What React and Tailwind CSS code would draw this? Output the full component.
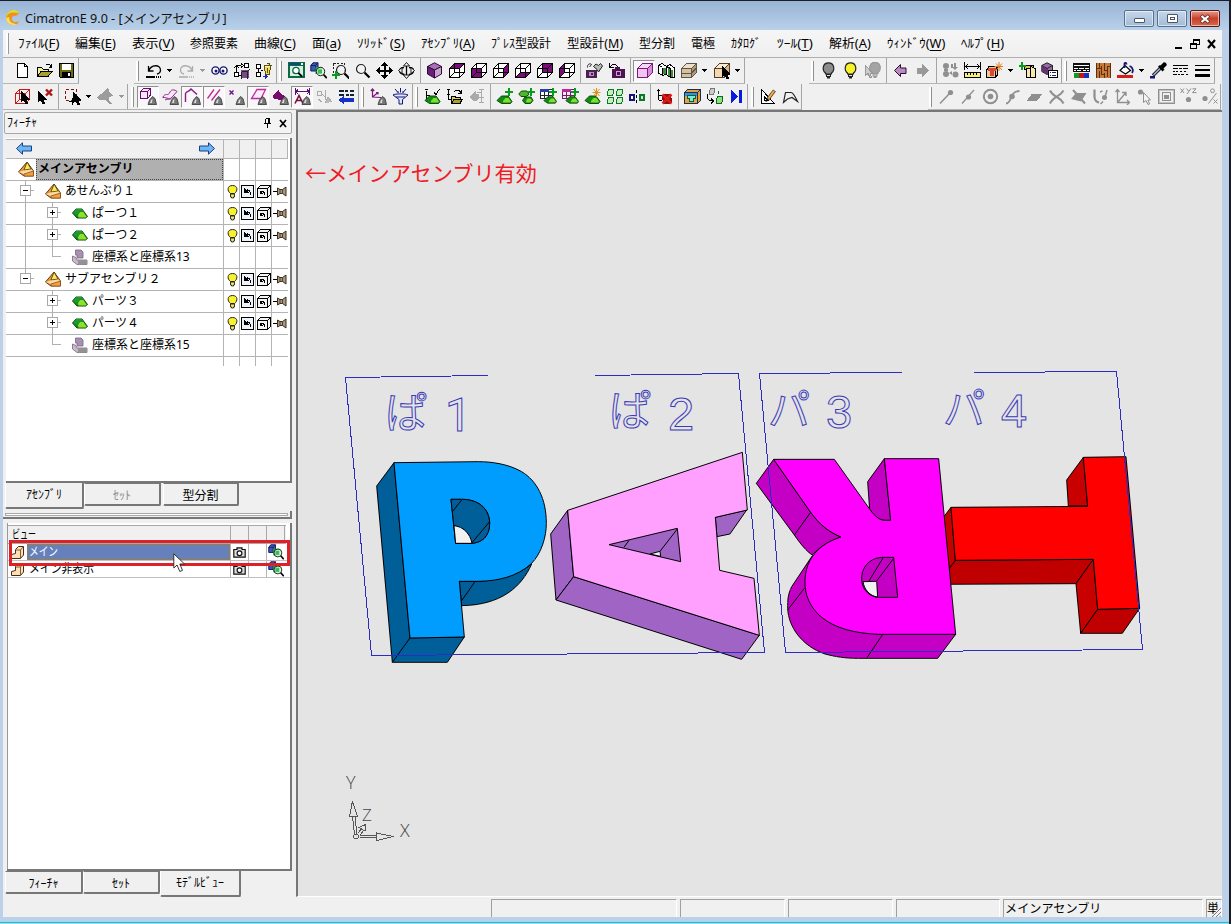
import React, { useLayoutEffect, useRef, useState } from "react";

const JP = "font-['Noto_Sans','Noto_Sans_CJK_JP',sans-serif]";

/* Text condensed or expanded to a fixed width. */
function Fit({ w, className = "", children }) {
  const ref = useRef(null);
  const [scale, setScale] = useState(1);
  useLayoutEffect(() => {
    setScale(w / ref.current.offsetWidth);
  }, [w]);
  return (
    <span className={"inline-block shrink-0 whitespace-nowrap " + className} style={{ width: w }}>
      <span ref={ref} className="inline-block origin-left" style={{ transform: `scaleX(${scale})` }}>
        {children}
      </span>
    </span>
  );
}

const L = ({ d, c = "#000", f = "none", w = 1 }) => <path d={d} stroke={c} fill={f} strokeWidth={w} />;
const F = ({ d, f = "#000" }) => <path d={d} fill={f} />;

const FACES = {
  top: "M1.5 6.500L6.500 1.500H16.500L11.500 6.500Z",
  front: "M1.500 6.500H11.500V15.500H1.500Z",
  right: "M11.500 6.500L16.500 1.500V10.500L11.500 15.500Z",
  bottom: "M1.500 15.500L6.500 10.500H16.500L11.500 15.500Z",
  back: "M6.500 1.500H16.500V10.500H6.500Z",
  left: "M1.500 6.500L6.500 1.500V10.500L1.500 15.500Z",
};
const WIRE = "M1.5 6.5H11.5V15.5H1.5ZM6.5 1.5H16.5V10.5H6.5ZM1.5 6.5L6.5 1.5M11.5 6.5L16.5 1.5M11.5 15.5L16.5 10.5M1.5 15.5L6.5 10.5";
const Cube = ({ face }) => (
  <>
    <F d="M1.500 6.500L6.500 1.500H16.500V10.500L11.500 15.500H1.500Z" f="#fff" />
    <F d={FACES[face]} f="#7b0a7b" />
    <L d={WIRE} />
  </>
);
const Solid = ({ a, b, c, s = "#000" }) => (
  <>
    <L d="M1.5 6.5L6.5 1.5H16.5L11.5 6.5Z" f={a} c={s} />
    <L d="M1.5 6.5H11.5V15.5H1.5Z" f={b} c={s} />
    <L d="M11.5 6.5L16.5 1.5V10.5L11.5 15.5Z" f={c} c={s} />
  </>
);
const Blob = () => (
  <g shapeRendering="auto">
    <path d="M8 16.500L9.500 12L12.500 8.500L15 10.500L16.500 16.500Z" fill="#777" stroke="#333" strokeWidth=".8" />
    <path d="M10 15L11 12L12.500 11L12 15Z" fill="#ddd" />
  </g>
);
const Green = () => (
  <g shapeRendering="auto">
    <L d="M1 12.500L5.500 8H12L16 13.500L14.500 15.500H5.500Z" f="#138a13" c="#0a4d0a" />
    <F d="M7 13L9.500 10H12.500L15 13.500L14 14.500H7Z" f="#7be02f" />
  </g>
);
const Plus = () => <F d="M12 0H14V3H17V5H14V8H12V5H9V3H12Z" f="#0a9a1e" />;
const Bulb = ({ f, c = "#222" }) => (
  <g shapeRendering="auto">
    <path d="M5.500 11C1.800 8 2.500 .8 8.500 .8S15.200 8 11.500 11V12H5.500Z" fill={f} stroke={c} strokeWidth="1.200" />
    <F d="M6 12H11V15H10V16.500H7V15H6Z" f={c} />
    <F d="M7 13H10V14H7Z" f="#ddd" />
  </g>
);
const Lens = ({ x = 0, y = 0 }) => (
  <g transform={`translate(${x} ${y})`} shapeRendering="auto">
    <circle cx="6" cy="6" r="4.500" fill="#f4f4f4" fillOpacity=".7" stroke="#222" strokeWidth="1.200" />
    <path d="M9.500 9.500L14.500 14.500" stroke="#000" strokeWidth="2.200" />
  </g>
);
const Zoomer = () => (
  <g shapeRendering="auto">
    <path d="M.8 3.500L3 .8H8V7L6 9H.8Z" fill="#3c56b8" stroke="#101860" />
    <path d="M.8 3.500H5.500V9M5.500 3.500L8 .8" fill="none" stroke="#101860" strokeWidth=".8" />
    <F d="M5.500 5H12V12H5.500Z" f="#1fa838" />
    <circle cx="10.500" cy="9.500" r="4.200" fill="#d8f4dc" fillOpacity=".75" stroke="#222" />
    <F d="M8 7.500H12V11.500H8Z" f="#2fc050" />
    <path d="M13.500 12.500L16.800 16.200" stroke="#000" strokeWidth="1.800" />
  </g>
);
const Cursor = ({ x = 0, y = 0, f = "#000", c = "#000" }) => (
  <g transform={`translate(${x} ${y})`}>
    <L d="M6.500 3.500V13.500L9 11.500L11 15.500L12.500 15L11 11H13.500Z" f={f} c={c} />
  </g>
);
const GT = "#8f8f8f";

const ICONS = {
  new: <L d="M3.500 1.500H10.500L13.500 4.500V15.500H3.500ZM10.500 1.500V4.500H13.500" f="#fff" />,
  open: (
    <>
      <L d="M1.500 14.500V5.500H5.500L7 7H12.500V9" f="#f4ef9a" />
      <L d="M1.500 14.500L5 9.500H16L12 14.500Z" f="#a8a030" />
      <L d="M9.500 3.500C11 1.500 13.500 1.500 15 4.500M15.500 2V5H12.500" />
    </>
  ),
  save: (
    <>
      <L d="M1.500 1.500H15.500V15.500H2.500L1.500 14.500Z" f="#6b6b16" />
      <F d="M4 2H13V8H4Z" f="#fff" />
      <F d="M4 10H13V15H4Z" />
      <F d="M10 11H12V14H10Z" f="#fff" />
    </>
  ),
  undo: (
    <>
      <g shapeRendering="auto">
        <path d="M3.500 4V9H8.500M4 8.500C6 2.500 15.500 2 15.500 8C15.500 10.500 14 11.500 12 12" fill="none" stroke="#000" strokeWidth="1.300" />
      </g>
      <L d="M1 14.500H10M11 14.500H12M13 14.500H14M15 14.500H16" w={2} />
    </>
  ),
  redo: (
    <>
      <g shapeRendering="auto">
        <path d="M14.500 4V9H9.500M14 8.500C12 2.500 2.500 2 2.500 8C2.500 10.500 4 11.500 6 12" fill="none" stroke="#aaa" strokeWidth="1.300" />
      </g>
      <L d="M1 14.500H10M11 14.500H12M13 14.500H14M15 14.500H16" c="#bbb" w={2} />
    </>
  ),
  eyes: (
    <g shapeRendering="auto">
      <circle cx="4.500" cy="8.500" r="3.600" fill="#fff" stroke="#14146e" strokeWidth="1.400" />
      <circle cx="12.500" cy="8.500" r="3.600" fill="#fff" stroke="#14146e" strokeWidth="1.400" />
      <circle cx="5" cy="9" r="1.500" fill="#14146e" />
      <circle cx="12" cy="9" r="1.500" fill="#14146e" />
    </g>
  ),
  swap: (
    <>
      <L d="M3.500 14V3.500H8M1 6L3.500 3.500L6 6M8 1.500L10.500 3.500L8 5.500M3 13.500H8" />
      <L d="M11.500 1.500H15.500V5.500H11.500ZM1.500 10.500H5.500V14.500H1.500Z" f="#fff" />
      <F d="M8 8H16V16H8Z" f="#7a4a88" />
      <L d="M8.500 9.500H14.500V16.500M14.500 9.500L16.500 7.500M8.500 9.500V16.500" c="#222" />
    </>
  ),
  purge: (
    <>
      <L d="M1.500 2.500H5.500V6.500H1.500ZM1.500 10.500H5.500V14.500H1.500ZM3.500 6.500V10.500M5.500 8.500H8" f="#fff" />
      <L d="M8.500 3.500H16.500M9.500 4.500L10.500 12.500H14.500L15.500 4.500M11.500 1.500H14V3" f="#f5dc4a" c="#5a5010" />
      <L d="M12.500 6V11" c="#5a5010" />
      <L d="M7.500 14.500H12M10 12.500L12.500 14.500L10 16.500" c="#1a30b0" />
    </>
  ),
  fitwin: (
    <>
      <F d="M0 0H17V16H0Z" f="#0a6a48" />
      <F d="M1 1H12V3H1Z" f="#1d3f8a" />
      <F d="M13 1H15V3H13Z" f="#fff" />
      <F d="M2 4H15V14H2Z" f="#d8f0dc" />
      <g shapeRendering="auto">
        <circle cx="8" cy="8.500" r="3.200" fill="#fff" stroke="#0a6a48" strokeWidth="1.300" />
        <path d="M10.300 10.800L14 14.500" stroke="#000" strokeWidth="1.800" />
      </g>
    </>
  ),
  zoomcol: <Zoomer />,
  zoomwin: (
    <>
      <path d="M1.500 1.500H12.500V12.500H1.500Z" fill="none" stroke="#222" strokeDasharray="2 1.500" />
      <Lens x={3} y={2} />
      <F d="M3 9H5V12H8V14H5V17H3V14H0V12H3Z" f="#0a9a1e" />
    </>
  ),
  lens: <Lens x={1} y={1} />,
  pan: (
    <>
      <L d="M8.500 2V15M2 8.500H15" w={2} />
      <F d="M8.500 0L12 4H5ZM8.500 17L12 13H5ZM0 8.500L4 5V12ZM17 8.500L13 5V12Z" />
    </>
  ),
  orbit: (
    <g shapeRendering="auto">
      <path d="M8.500 3V14M6.500 12.500C0 11.500 0 5.500 6 5.500M11 5.500C17 5.500 17 11.500 11 12.500" fill="none" stroke="#000" strokeWidth="1.300" />
      <path d="M8.500 .5L11.500 4H5.500ZM8.500 16.500L11.500 13H5.500ZM.5 8.500L4 5.500V11.500ZM16.500 8.500L13 5.500V11.500Z" fill="#fff" stroke="#000" strokeWidth=".9" />
    </g>
  ),
  iso: (
    <g shapeRendering="auto">
      <L d="M1.500 4.500L8.500 .8L15.500 4.500L8.500 8Z" f="#a96fb5" c="#2d0b35" />
      <L d="M1.500 4.500L8.500 8V16L1.500 12Z" f="#6a1f7a" c="#2d0b35" />
      <L d="M15.500 4.500L8.500 8V16L15.500 12Z" f="#c9a3d0" c="#2d0b35" />
    </g>
  ),
  cTop: <Cube face="top" />,
  cFront: <Cube face="front" />,
  cRight: <Cube face="right" />,
  cBottom: <Cube face="bottom" />,
  cBack: <Cube face="back" />,
  cLeft: <Cube face="left" />,
  heartbox: (
    <>
      <g shapeRendering="auto">
        <path d="M7.500 4.500L10 2L12.500 3.500L14.500 1.500L16.500 4L12.500 10L11 7.500Z" fill="#b8b8b8" stroke="#222" />
        <path d="M1.500 5.500C1 2.500 4 .8 5.500 2.500L3.500 5" fill="none" stroke="#222" />
      </g>
      <F d="M0 8H11V16H0Z" f="#4b2350" />
      <F d="M3 10H8V14H3Z" f="#b98cc0" />
      <F d="M5 11H7V13H5Z" f="#4b2350" />
    </>
  ),
  camundo: (
    <>
      <L d="M1.500 1V5.500H5.500M2 5C5 1 9 2 9.500 5.500" />
      <F d="M4 7H17V16H4ZM7 5H12V7H7Z" f="#4b1450" />
      <F d="M8 9H13V14H8Z" f="#cda0d4" />
      <F d="M9 10H12V13H9Z" f="#4b1450" />
    </>
  ),
  shade: <Solid a="#f6d8f6" b="#f1c4f1" c="#d58ed5" s="#7a1a7a" />,
  section: (
    <>
      <L d="M.5 3.500L4 1.500L8.500 4.500L12 2.500L16.500 6V15.500H12.500L8 12.500L4.500 13.500L.5 11Z" f="#fff" />
      <F d="M5 6H8V12H5ZM10 6H12V14H10ZM13 8H15V15H13Z" f="#3f8a3f" />
      <L d="M4.500 5.500V13M8.500 5V12M12.500 6V15M4.500 5.500L1 3.500M12.500 6.500L8.500 4.500" />
    </>
  ),
  tanbox: (
    <>
      <Solid a="#efdfc6" b="#d9c09a" c="#b8986e" s="#555" />
      <L d="M1.500 11H11.500L16.500 6" c="#555" />
    </>
  ),
  pickbox: (
    <>
      <Solid a="#f9ead2" b="#f1d8b2" c="#d8b48a" s="#5a3a1a" />
      <Cursor x={3} y={1} />
    </>
  ),
  bulbGray: <Bulb f="#8c8c8c" />,
  bulbOn: <Bulb f="#f8f22a" />,
  bulbPick: (
    <>
      <g transform="translate(2.500 -.5)">
        <Bulb f="#a4a4a4" c="#999" />
      </g>
      <Cursor x={-5} f="#ccc" c="#999" />
    </>
  ),
  prev: (
    <g shapeRendering="auto">
      <L d="M2.500 8.500L8.500 2.500V6H14V11.500H8.500V14.500Z" f="#b98cc0" c="#2d0b35" />
    </g>
  ),
  next: <L d="M14.500 8.500L8.500 3V6H3.500V11.500H8.500V14.500Z" f="#999" c="#999" />,
  graydots: (
    <g shapeRendering="auto">
      <circle cx="4" cy="4" r="3" fill={GT} />
      <circle cx="4" cy="12" r="3" fill={GT} />
      <circle cx="13.500" cy="12.500" r="3" fill={GT} />
      <F d="M9 2H11V6H9ZM12 1H14V5H16L13 8L10 5H12ZM7 11L10 9V13ZM2 7H6V9H2Z" f={GT} />
    </g>
  ),
  measure: (
    <>
      <L d="M.5 0V8M16.500 0V8M1 4.500H16M4 2L1.500 4.500L4 7M13 2L15.500 4.500L13 7" />
      <L d="M.5 10.500H16.500V15.500H.5Z" f="#f6ef7a" />
      <L d="M3.500 11V13M6.500 11V13M9.500 11V13M12.500 11V13" />
    </>
  ),
  boxspark: (
    <>
      <L d="M.5 7.500L3 4.500H11.500V13L9.500 15.500H.5ZM.5 7.500H9.500V15M9.500 7.500L11.500 4.500" f="#eec9a0" />
      <F d="M2 6H10V9H8V14H4V9H2Z" f="#d84a30" />
      <g shapeRendering="auto">
        <L d="M13 0V9M8.500 4.500H17M10 1.500L16 8M16 1.500L10 8" c="#e07b1a" />
      </g>
    </>
  ),
  pastepl: (
    <>
      <L d="M5.500 3.500H14.500V7.500H5.500Z" f="#e6c35a" />
      <L d="M7.500 6.500H11.500V15.500H7.500ZM11.500 4.500L16.500 6.500V15.500H11.500Z" f="#f6e9b0" />
      <F d="M2 0H4V3H7V5H4V8H2V5H0V3H2Z" f="#0a9a1e" />
    </>
  ),
  cubeprops: (
    <>
      <g shapeRendering="auto">
        <L d="M.8 3.500L6 .8L11.500 3.500V9.500L6 12.500L.8 9.500Z" f="#9a6aa8" c="#222" />
        <L d="M.8 3.500L6 6.500L11.500 3.500M6 6.500V12" c="#222" />
        <F d="M1 4L6 7V12L1 9.500Z" f="#6a2f7a" />
      </g>
      <L d="M7.500 8.500H16.500V15.500H7.500Z" f="#fff" />
      <L d="M9 10.500H10M11 10.500H15M9 13.500H10M11 13.500H15" c="#226" />
    </>
  ),
  palette: (
    <>
      <F d="M0 1H17V10H0Z" f="#111" />
      <L d="M1 3.500H16M1 6.500H5M6 6.500H11M12 6.500H16M1 8.500H3M4 8.500H8M10 8.500H13M14 8.500H16" c="#fff" />
      <F d="M1 11H6V16H1Z" f="#109a28" />
      <F d="M6 11H11V16H6Z" f="#c01818" />
      <F d="M11 11H16V16H11Z" f="#1830c0" />
    </>
  ),
  bricks: (
    <>
      <F d="M1 1H16V16H1Z" f="#c87a3a" />
      <L d="M1.500 1V16M4.500 1V7M6.500 4V12M9.500 1V8M12.500 5V15M4.500 9V16M9.500 11V16M15.500 1V16M1 6.500H6M6 12.500H10M9 8.500H13M12 4.500H16" c="#5f2f0c" />
    </>
  ),
  paint: (
    <>
      <g shapeRendering="auto">
        <path d="M3 8.500L8 3.500L13.500 8.500L8.500 12Z" fill="#fff" stroke="#000" strokeWidth="1.200" />
        <path d="M7.500 6V1.500C8 .5 9.500 .5 9.500 2.500M12.500 4C16 5 16.500 9 15 11" fill="none" stroke="#14147a" strokeWidth="1.800" />
      </g>
      <F d="M0 13H16V16H0Z" f="#d81c1c" />
    </>
  ),
  dropper: (
    <g shapeRendering="auto">
      <path d="M3 13.500L10.500 6" stroke="#222" strokeWidth="3.400" />
      <path d="M3.500 13L10 6.500" stroke="#9fb8d8" strokeWidth="1.400" />
      <F d="M8 4.500L10 3L14.500 7.500L12.500 9.500ZM10.500 3.500L13.500 .5C15 -.5 17.500 2 16.500 3.500L13.500 6.500Z" />
      <F d="M0 14H5V16.500H0Z" f="#14147a" />
    </g>
  ),
  linetypes: (
    <L d="M1 3.500H16M1 6.500H6M7 6.500H10M11 6.500H16M1 9.500H3M4 9.500H6M8 9.500H10M12 9.500H14M1 12.500H5M6 12.500H8M9 12.500H12M14 12.500H16" />
  ),
  lineweights: (
    <>
      <F d="M1 3H16V4H1ZM1 7H16V9H1ZM1 12H16V15H1Z" />
    </>
  ),
  selbox: (
    <>
      <L d="M1.500 5.500H11.500V15.500H1.500ZM5.500 1.500H15.500V11.500H5.500ZM1.500 5.500L5.500 1.500M11.500 5.500L15.500 1.500M11.500 15.500L15.500 11.500M1.500 15.500L5.500 11.500" c="#c81818" />
      <Cursor x={1} />
    </>
  ),
  curx: (
    <>
      <Cursor x={-4} y={0} />
      <g shapeRendering="auto">
        <L d="M10 1.500L16 7.500M16 1.500L10 7.500" c="#b01414" w={2.4} />
      </g>
    </>
  ),
  marquee: (
    <>
      <path d="M1.500 1.500H12.500V12.500H1.500Z" fill="none" stroke="#8a1010" strokeWidth="1.500" strokeDasharray="3 2" />
      <Cursor x={3} y={1} />
      <L d="M5 13.500H11M8.500 10V16.500" />
    </>
  ),
  graytool: <F d="M0 9L7 4L10 0L12 1V4L16 8L12 9V12L15 16H12L8 11L7 12H2Z" f="#9c9c9c" />,
  h1: (
    <>
      <L d="M.5 3.500L3.500 .5H10.500V7L7.500 10.500H.5ZM.5 3.500H7.500V10M7.500 3.500L10.500 .5" c="#6a0a6a" f="#f7e6f7" />
      <Blob />
    </>
  ),
  h2: (
    <g shapeRendering="auto">
      <L d="M.8 9.500C3 4 6 9 8 4C9.500 1 12.500 1.500 15 3.500L11 8C8 13 5 9 .8 9.500Z" c="#8a2a8a" f="#f7e6f7" />
      <L d="M3 12C6 10 8 13 10 9" c="#8a2a8a" />
      <Blob />
    </g>
  ),
  h3: (
    <g shapeRendering="auto">
      <L d="M1.500 14V5.500C3 3 5 4 7 1L13 6.500" c="#8a1a8a" w={1.4} />
      <Blob />
    </g>
  ),
  h4: (
    <g shapeRendering="auto">
      <L d="M1.500 10.500L8 1.500M5.500 12.500L14 1.500" c="#c02a90" w={1.3} />
      <Blob />
    </g>
  ),
  h5: (
    <>
      <g shapeRendering="auto">
        <L d="M1.500 2.500L5.500 6.500M5.500 2.500L1.500 6.500" c="#6a0a8a" w={1.3} />
      </g>
      <Blob />
    </>
  ),
  h6: (
    <>
      <g shapeRendering="auto">
        <L d="M1.500 10.500L7 1.500H15.500L11 10.500Z" c="#c02aa0" w={1.3} f="#f9eef9" />
      </g>
      <Blob />
    </>
  ),
  h7: (
    <>
      <F d="M1 8L7 1V4L14 9L9 12L2 11Z" f="#7a0a6a" />
      <Blob />
    </>
  ),
  h8: (
    <>
      <L d="M1.500 0V7M15.500 0V7M2 3.500H15M4 1.500L2 3.500L4 6M13 1.500L15 3.500L13 6" c="#5a0a7a" />
      <g shapeRendering="auto">
        <L d="M1 15.500L5 7.500L9 15.500M2.500 12.500H7.500" c="#7a0a3a" w={1.6} />
      </g>
      <Blob />
    </>
  ),
  h9: (
    <>
      <L d="M1.500 3.500H5.500V7.500H1.500ZM5.500 5.500L9 9M9 2V12M2 11L6 14" c="#aaa" />
      <L d="M9 15L12 9L16 14" f="#bbb" c="#aaa" />
    </>
  ),
  h10: (
    <>
      <L d="M1 2.500H6M7 2.500H10M12 2.500H16M1 6.500H6M8 6.500H11M12 6.500H16" w={2} c="#123" />
      <F d="M0 12L6 8V10H16V14H6V16Z" f="#1430c8" />
    </>
  ),
  axhide: (
    <>
      <g shapeRendering="auto">
        <L d="M2.500 1V9L11 9.500M2.500 9L8 4.500M.8 3L2.500 1L4.200 3M8 6.500V4.500H6" c="#7a1a7a" w={1.2} />
      </g>
      <Blob />
    </>
  ),
  funnel: (
    <g shapeRendering="auto">
      <path d="M1 7C3 5.500 14 5.500 16 7L10.500 11.500V16H7V11.500Z" fill="#dde6ff" stroke="#14147a" />
      <L d="M3 1L6 4.500M8.500 0V4.500M14 1L11 4.500M4 9H13M6 3V5M11 3V5" c="#14147a" />
    </g>
  ),
  asmadd: (
    <>
      <L d="M2.500 2.500V12.500H7M2.500 7.500H6M1 1.500H4M10 4.500L12 6.500L15.500 1" />
      <Green />
    </>
  ),
  asmopen: (
    <>
      <L d="M2.500 1.500V11.500H6M1 1.500H4M1 6.500H4M8 4C10 1 14 2 15 5M15.500 2V5H12" />
      <L d="M5.500 8.500H9L10 9.500H14.500V14.500H5.500Z" f="#d8cf50" />
      <L d="M5.500 15.500L8 11.500H16L14 15.500Z" f="#a8a030" />
    </>
  ),
  asmgray: (
    <>
      <F d="M1 9L8 3V6H11V10L8 13H5Z" f="#aaa" />
      <L d="M9 4.500H14M13.500 1V15M11 9.500H16M11 14.500H16M11 1.500H16" c="#aaa" />
    </>
  ),
  gplus: (
    <>
      <Green />
      <Plus />
    </>
  ),
  g2plus: (
    <>
      <g shapeRendering="auto">
        <L d="M.8 6L3.500 3H9L11 6.500L8 8.500H3Z" f="#4fb82a" c="#0a4d0a" />
        <L d="M4.500 12.500L7 9H13L15 12.500L12.500 15.500H7Z" f="#138a13" c="#0a4d0a" />
        <F d="M8 13L9.500 10.500H12.500L14 12.500L12 14.500H8.500Z" f="#7be02f" />
      </g>
      <Plus />
    </>
  ),
  tplus: (
    <>
      <L d="M.5 1.500H12.500V10.500H.5Z" f="#fff" c="#223" />
      <F d="M0 1H9V4H0Z" f="#2440a8" />
      <L d="M4.500 4V10M8.500 4V10M1 7.500H12" c="#223" />
      <g transform="translate(3 2) scale(.85)">
        <Green />
      </g>
      <Plus />
    </>
  ),
  pplus: (
    <>
      <L d="M.5 1.500H12.500V10.500H.5Z" f="#fbe6f6" c="#7a1a6a" />
      <F d="M0 1H9V4H0Z" f="#b82a98" />
      <L d="M4.500 4V10M8.500 4V10M1 7.500H12" c="#7a1a6a" />
      <g transform="translate(3 2) scale(.85)">
        <Green />
      </g>
      <Plus />
    </>
  ),
  gspark: (
    <>
      <Green />
      <g shapeRendering="auto">
        <L d="M12.500 0V9M8.500 4.500H16.500M9.500 1L15.500 8M15.500 1L9.500 8" c="#e0901a" />
      </g>
    </>
  ),
  gfour: (
    <L
      d="M1.500 3.500L3 1.500H7.500V5.500L6 7.500H1.500ZM10.500 3.500L12 1.500H16.500V5.500L15 7.500H10.500ZM1.500 11.500L3 9.500H7.500V13.500L6 15.500H1.500ZM10.500 11.500L12 9.500H16.500V13.500L15 15.500H10.500Z"
      f="#c8f0b8"
      c="#0a7a2a"
    />
  ),
  mirror: (
    <>
      <L d="M1.500 6.500H5.500V11.500H1.500Z" f="#fff" c="#14147a" w={2} />
      <L d="M11.500 6.500H15.500V11.500H11.500Z" f="#bff0b0" c="#0a7a2a" w={2} />
      <L d="M8.500 2V5M8.500 7V10M8.500 12V15" />
    </>
  ),
  gdel: (
    <>
      <L d="M2.500 1V12M1 2.500H4M2.500 7.500H6M2.500 12H6" />
      <F d="M6 8L9 6H15L16 14L13 16H7Z" f="#8a1010" />
      <g shapeRendering="auto">
        <L d="M6.500 6.500L15.500 15.500M15.500 6.500L6.500 15.500" c="#e01818" w={2.5} />
      </g>
    </>
  ),
  mold: (
    <>
      <L d="M.5 4.500L3.500 1.500H16.500V12.500L13.500 15.500H.5Z" f="#e8a03a" c="#16305a" />
      <F d="M1 5H13V8H1Z" f="#3a90d8" />
      <L d="M3.500 7.500H11.500V10.500H9.500V13.500H5.500V10.500H3.500Z" f="#7fe8d4" c="#063" />
      <L d="M.5 4.500H13.500V15.500M13.500 4.500L16.500 1.500" c="#16305a" />
    </>
  ),
  link: (
    <>
      <L d="M3.500 2.500L5 .5H8.500V4.500L7 6.500H3.500Z" f="#ccc" c="#777" />
      <L d="M1.500 6C0 11 3 13 7 13M5 10.500L7.500 13L5 15.500" />
      <L d="M10.500 10.500L12 8.500H16.500V13.500L15 15.500H10.500ZM12.500 3V6" f="#8fe07a" c="#0a6a2a" />
    </>
  ),
  end: <F d="M3 2L10 8.500L3 15ZM11 2H14V15H11Z" f="#0a1ae0" />,
  sketch: (
    <>
      <L d="M1.500 1.500V15.500H14.500ZM4.500 9V12.500H8.500Z" f="#fff" />
      <g shapeRendering="auto">
        <path d="M8 11L14.500 2.500" stroke="#7a4a1a" strokeWidth="3.600" />
        <path d="M8.500 10.500L14 3" stroke="#f0b860" strokeWidth="1.600" />
        <F d="M5.500 14L6.500 10L9.500 12.300Z" />
      </g>
    </>
  ),
  polyl: (
    <g shapeRendering="auto">
      <L d="M1.500 14.500L3.500 4.500H9C11 4.500 12.500 7 15.500 13.500L10 9.500L5.500 11Z" c="#222" w={1.2} />
    </g>
  ),
  p1: (
    <g shapeRendering="auto">
      <L d="M2 15.500L12 5" c={GT} w={1.5} />
      <circle cx="12.500" cy="4.500" r="2.600" fill={GT} />
    </g>
  ),
  p2: (
    <g shapeRendering="auto">
      <L d="M2 15.500L14 2" c={GT} w={1.3} />
      <circle cx="8.500" cy="9" r="2.600" fill={GT} />
    </g>
  ),
  p3: (
    <g shapeRendering="auto">
      <circle cx="8.500" cy="8.500" r="6.700" fill="none" stroke={GT} strokeWidth="2" />
      <circle cx="8.500" cy="8.500" r="2.800" fill={GT} />
    </g>
  ),
  p4: (
    <g shapeRendering="auto">
      <L d="M2 15.500C9 15 4 4 15.500 3" c={GT} w={1.8} />
      <circle cx="8" cy="8.500" r="2.800" fill={GT} />
    </g>
  ),
  p5: <F d="M1 12.500L6 5.500H16.500L11.500 12.500Z" f={GT} />,
  p6: (
    <g shapeRendering="auto">
      <L d="M2 2.500C5 9.500 12 8 15.500 15.500M2 15.500C5 8.500 12 9 15.500 2.500" c={GT} w={2} />
    </g>
  ),
  p7: (
    <g shapeRendering="auto">
      <F d="M1 11L6 5H16.500L11 13.500Z" f={GT} />
      <L d="M3 2L15 15.500" c={GT} w={2} />
    </g>
  ),
  p8: (
    <g shapeRendering="auto">
      <L d="M2.500 1.500V9C3 14 5.500 14 7 14.500" c={GT} w={2.2} />
      <L d="M8 4L10.500 3M11 13.500L8.500 16M15 2L13 9" c={GT} w={1.5} />
      <circle cx="12.500" cy="9.500" r="2.500" fill={GT} />
    </g>
  ),
  p9: (
    <g shapeRendering="auto">
      <L d="M3.500 1.500V14.500H15.500M3.500 14.500L11.500 5M1.500 4L3.500 1.500L5.500 4M13 12L15.500 14.500L13 17M8 4.500H12V8" c={GT} w={1.3} />
    </g>
  ),
  p10: (
    <g shapeRendering="auto">
      <circle cx="4.500" cy="4" r="2.600" fill={GT} />
      <Cursor x={1} y={1} f="#f4f4f4" c={GT} />
    </g>
  ),
  p11: (
    <>
      <L d="M.5 1.500H16.500V15.500H.5ZM4.500 4.500H12.500V12.500H4.500Z" c={GT} />
      <L d="M1.500 2.500H15.500V14.500H1.500Z" c="#c4c4c4" />
      <F d="M6 7H11V11H6Z" f={GT} />
    </>
  ),
  p12: (
    <g shapeRendering="auto">
      <L d="M.5 .5L4 5M4 .5L.5 5M6.500 .5L8.500 3M11 .5L7 6M12.500 .8H16L12.500 4.600H16.500" c={GT} />
      <circle cx="8.500" cy="11.500" r="2.600" fill={GT} />
    </g>
  ),
  p13: (
    <g shapeRendering="auto">
      <circle cx="3" cy="10.500" r="2.600" fill={GT} />
      <circle cx="10.500" cy="2.800" r="1.900" fill="none" stroke={GT} />
      <L d="M14.500 5L6.500 15.500M11.500 11.500L15.500 15.500M15.500 11.500L11.500 15.500" c={GT} />
    </g>
  ),
};

function Icon({ name, on }) {
  return (
    <span
      className={
        "flex h-[22px] w-[22px] shrink-0 items-center justify-center " +
        (on ? "border border-t-[#8f8f8f] border-l-[#8f8f8f] border-r-white border-b-white bg-[#f9f7f9]" : "")
      }
    >
      <svg width="17" height="17" viewBox="0 0 17 17" className="shrink-0" shapeRendering="crispEdges">
        {ICONS[name]}
      </svg>
    </span>
  );
}

/* "|" separator, "v" / "g" drop-down arrows, "*" prefix for a pressed button */
function Bar({ items, grip = true, className = "" }) {
  return (
    <div className={"flex h-full shrink-0 items-center border-r border-b border-[#a5a5a5] border-b-[#b5b5b5] " + className}>
      {grip && <span className="mr-[3px] h-[20px] w-[3px] shrink-0 border-r border-[#8f8f8f] bg-white" />}
      {items.split(" ").map((it, i) => {
        if (it === "|")
          return (
            <span key={i} className="flex h-full w-[6px] shrink-0 justify-center">
              <span className="h-full w-px bg-[#a5a5a5]" />
            </span>
          );
        if (it === "v" || it === "g")
          return (
            <span key={i} className="flex w-[11px] shrink-0 justify-center">
              <svg width="5" height="3" viewBox="0 0 5 3" shapeRendering="crispEdges">
                <path d="M0 0H5L2.500 3Z" fill={it === "v" ? "#000" : "#999"} />
              </svg>
            </span>
          );
        const on = it[0] === "*";
        return <Icon key={i} name={on ? it.slice(1) : it} on={on} />;
      })}
    </div>
  );
}

const MENUS = [
  [41, "ﾌｧｲﾙ", "F"],
  [41, "編集", "E"],
  [42, "表示", "V"],
  [48, "参照要素"],
  [42, "曲線", "C"],
  [29, "面", "a"],
  [48, "ｿﾘｯﾄﾞ", "S"],
  [54, "ｱｾﾝﾌﾞﾘ", "A"],
  [60, "ﾌﾟﾚｽ型設計"],
  [56, "型設計", "M"],
  [36, "型分割"],
  [24, "電極"],
  [30, "ｶﾀﾛｸﾞ"],
  [36, "ﾂｰﾙ", "T"],
  [42, "解析", "A"],
  [58, "ｳｨﾝﾄﾞｳ", "W"],
  [43, "ﾍﾙﾌﾟ", "H"],
];

function TitleBar() {
  const btn = "flex h-[17px] items-center justify-center rounded-[2px] border shadow-[inset_0_0_0_1px_rgba(255,255,255,0.55)]";
  return (
    <div className="flex h-[29px] shrink-0 items-center bg-gradient-to-b from-[#98b4d4] to-[#b9d1ea] pr-[9px] pl-[6px]">
      <svg width="14" height="16" viewBox="0 0 14 16" className="mt-[4px]">
        <path d="M8 0C3 0 0 4 0 8s3 7 7 7c3 0 5-1 6-4c-3 2-6 1-7-1c-1-3 1-5 4-4L13 3C12 1 10 0 8 0Z" fill="#f0901e" />
        <path d="M8 0C3 0 0 4 0 8c1-4 4-6 8-5.500L13 3C12 1 10 0 8 0Z" fill="#d8e03a" />
        <path d="M0 8c0 4 3 7 7 7c1.500 0 3 0 4-1C7 14 3 12 3 7Z" fill="#f6e060" />
      </svg>
      <Fit w={202} className="mt-[5px] ml-[5px] text-[13px] leading-[18px] text-[#111]">
        CimatronE 9.0 - [メインアセンブリ]
      </Fit>
      <div className="mt-[6px] ml-auto flex gap-[3px]">
        <span className={btn + " w-[30px] border-[#5a6f8c] bg-gradient-to-b from-[#c5d7ea] to-[#a3bbd6]"}>
          <span className="mt-[4px] h-[5px] w-[11px] rounded-[1px] border border-[#4c566a] bg-white" />
        </span>
        <span className={btn + " w-[30px] border-[#5a6f8c] bg-gradient-to-b from-[#c5d7ea] to-[#a3bbd6]"}>
          <span className="flex h-[9px] w-[11px] items-center justify-center rounded-[1px] border border-[#4c566a] bg-white">
            <span className="h-[3px] w-[5px] border border-[#4c566a]" />
          </span>
        </span>
        <span className={btn + " w-[30px] border-[#5c1410] bg-gradient-to-b from-[#e09a8a] via-[#c8402a] to-[#d4684c]"}>
          <svg width="12" height="10" viewBox="0 0 12 10">
            <path d="M2 1.500L10 8.500M10 1.500L2 8.500" stroke="#5b2a2a" strokeWidth="3.600" />
            <path d="M2.500 2L9.500 8M9.500 2L2.500 8" stroke="#fff" strokeWidth="2.200" />
          </svg>
        </span>
      </div>
    </div>
  );
}

function MenuBar() {
  return (
    <div className="flex h-[28px] shrink-0 items-center gap-[16px] border-b border-[#b0b0b0] bg-gradient-to-b from-[#f6f6f6] to-[#efefef] pl-[3px]">
      <span className="-mr-[7px] h-[21px] w-[3px] border-r border-[#9a9a9a] bg-white" />
      {MENUS.map(([w, t, k], i) => (
        <Fit key={i} w={w} className={"mt-px text-[12px] leading-[18px] text-black " + JP}>
          {t}
          {k && (
            <>
              (<span className="underline underline-offset-2">{k}</span>)
            </>
          )}
        </Fit>
      ))}
      <div className="mr-[5px] ml-auto flex items-center gap-[6px]">
        <svg width="42" height="12" viewBox="0 0 42 12" shapeRendering="crispEdges">
          <path d="M0 9H7V11H0Z" />
          <path d="M18.500 5V1.500H24.500V6.500H22M15.500 5.500H21.500V10.500H15.500Z" fill="none" stroke="#000" />
          <path d="M18 1H25V3H18ZM15 5H22V7H15Z" />
          <path d="M33 2L40 10M40 2L33 10" stroke="#000" strokeWidth="2.200" shapeRendering="auto" />
        </svg>
      </div>
    </div>
  );
}

const Pyramid = () => (
  <svg width="16" height="16" viewBox="0 0 16 16" className="shrink-0">
    <path d="M0.500 11L9 1L15.500 10V15H6Z" fill="#e8953c" stroke="#6b3a10" />
    <path d="M6 9L9 1L13 8Z" fill="#f8ec50" stroke="#4a3a10" strokeWidth=".8" />
    <path d="M0.500 11L6 9.500L13 8.500L15.500 10L6 13Z" fill="#fbd9a8" />
    <path d="M6 13L15.500 10V15H6Z" fill="#f0a040" stroke="#8a4a10" strokeWidth=".7" />
  </svg>
);
const Part = () => (
  <svg width="16" height="16" viewBox="0 0 16 16" className="shrink-0">
    <path d="M0.500 8L4 4H10L15.500 11.500L14 13H5Z" fill="#128a20" stroke="#0a4a0a" />
    <path d="M6 10L8 7H11.500L15 12.500H6.500Z" fill="#8fe02a" />
    <path d="M4 4H10L12 6.500H8L5.500 10L1 8Z" fill="#1f9a30" />
  </svg>
);
const Csys = () => (
  <svg width="16" height="16" viewBox="0 0 16 16" className="shrink-0">
    <path d="M3.500 1H9L11 3V9H5V6H3.500Z" fill="#a890b0" stroke="#7a6484" strokeWidth=".8" />
    <path d="M0.500 7L4 8.500L5 11H15V15.500H5L0.500 12Z" fill="#c9b8cc" stroke="#77667c" strokeWidth=".8" />
    <path d="M6 11H15V15.500H6Z" fill="#929292" />
  </svg>
);

const TREE = [
  [0, "asm", "あせんぶり１", 70],
  [1, "part", "ぱーつ１", 47],
  [1, "part", "ぱーつ２", 47],
  [1, "csys", "座標系と座標系13", 98],
  [0, "asm", "サブアセンブリ２", 95],
  [1, "part", "パーツ３", 47],
  [1, "part", "パーツ４", 47],
  [1, "csys", "座標系と座標系15", 98],
];

function TreeRow({ row, i }) {
  const [lv, kind, text, w] = row;
  const inFirst = i < 4;
  return (
    <div className="flex h-[22px] border-b border-[#b4b4b4]">
      <div className="flex w-[218px] shrink-0 items-center border-r border-[#b4b4b4]">
        {lv === 0 ? (
          <svg width="39" height="22" viewBox="0 0 39 22" shapeRendering="crispEdges" className="shrink-0">
            <path d={i === 0 ? "M19.500 0V22M25 10.500H28" : "M19.500 0V11M25 10.500H28"} stroke="#b0b0b0" />
            <path d="M14.500 5.500H24.500V15.500H14.500Z" fill="#fff" stroke="#a8a8a8" />
            <path d="M17 10.500H22" stroke="#000" />
          </svg>
        ) : (
          <svg width="66" height="22" viewBox="0 0 66 22" shapeRendering="crispEdges" className="shrink-0">
            {inFirst && <path d="M19.500 0V22" stroke="#b0b0b0" />}
            <path d={kind === "csys" ? "M46.500 0V10.500H55" : "M46.500 0V22M51 10.500H55"} stroke="#b0b0b0" fill="none" />
            {kind === "part" && (
              <>
                <path d="M41.500 5.500H51.500V15.500H41.500Z" fill="#fff" stroke="#a8a8a8" />
                <path d="M44 10.500H49M46.500 8V13" stroke="#000" />
              </>
            )}
          </svg>
        )}
        {kind === "asm" ? <Pyramid /> : kind === "part" ? <Part /> : <Csys />}
        <Fit w={w} className={"ml-[4px] text-[12px] leading-[20px] text-black " + JP}>
          {text}
        </Fit>
      </div>
      {[0, 1, 2, 3].map((c) => (
        <div key={c} className={"flex w-[16px] shrink-0 items-center justify-center " + (c < 3 ? "border-r border-[#b4b4b4]" : "")}>
          {kind !== "csys" && <StateIcon c={c} />}
        </div>
      ))}
    </div>
  );
}

function StateIcon({ c }) {
  if (c === 0)
    return (
      <svg width="11" height="15" viewBox="0 0 11 15" className="ml-[2px] shrink-0">
        <path d="M3.500 9.500C0 7 0 1.500 5.500 1.500S11 7 7.500 9.500Z" fill="#f8f22a" stroke="#222" />
        <path d="M3.500 10H7.500V13H6.500V14H4.500V13H3.500Z" fill="#eee26a" stroke="#222" strokeWidth=".9" />
      </svg>
    );
  if (c === 1)
    return (
      <svg width="13" height="13" viewBox="0 0 13 13" className="shrink-0" shapeRendering="crispEdges">
        <path d="M.5 .5H12.500V12.500H.5Z" fill="#eef3fb" stroke="#000" />
        <path d="M3 3V8H8Z" fill="#000" />
        <path d="M4.500 6C6 4 10 5 9.500 10.500" fill="none" stroke="#000" />
      </svg>
    );
  if (c === 2)
    return (
      <svg width="14" height="13" viewBox="0 0 14 13" className="shrink-0" shapeRendering="crispEdges">
        <path d="M.5 3.500L3.500 .5H13.500V9.500L10.500 12.500H.5ZM.5 3.500H10.500V12.500M10.500 3.500L13.500 .5" fill="#f4f4f4" stroke="#000" />
        <path d="M3 5.500V8.500H6M3.500 8C5 5.500 8.500 6.500 7.500 10.500" fill="none" stroke="#000" />
      </svg>
    );
  return (
    <svg width="14" height="11" viewBox="0 0 14 11" className="shrink-0">
      <path d="M0 5.500H5" stroke="#000" />
      <path d="M4.500 2L7 3.500H9.500L13 1V10L9.500 7.500H7L4.500 9Z" fill="#a89880" stroke="#3a3020" />
      <path d="M7 3.500V7.500M9.500 3.500V7.500" stroke="#3a3020" strokeWidth=".8" />
    </svg>
  );
}

function Tab({ w, tw, active, dim, children }) {
  return (
    <div
      className={
        "flex shrink-0 justify-center rounded-b-[2px] border-r-2 border-b-2 border-l border-[#777] border-l-white bg-[#f0f0f0] " +
        (active ? "h-[26px] pt-[2px]" : "h-[23px] border-t border-t-[#777] pt-[2px]")
      }
      style={{ width: w }}
    >
      <Fit w={tw} className={"text-[12px] leading-[20px] " + (dim ? "text-[#8a8a8a] " : "text-black ") + JP}>
        {children}
      </Fit>
    </div>
  );
}

const Block = () => (
  <svg width="13" height="13" viewBox="0 0 13 13" className="shrink-0">
    <path d="M.5 12.500V8.500L4.500 7.500V3.500L7.500 .5H12.500V9L9.500 12.500Z" fill="#fbe0b8" stroke="#4a2a10" />
    <path d="M5 4H9.500V12M9.500 4L12.500 .5" fill="none" stroke="#8a5a2a" />
  </svg>
);
const Camera = () => (
  <svg width="13" height="11" viewBox="0 0 13 11" className="shrink-0">
    <path d="M.8 2.500H4V.8H9V2.500H12.200V10.200H.8Z" fill="#ddd" stroke="#111" strokeWidth="1.200" />
    <circle cx="6.500" cy="6.300" r="2.400" fill="#fff" stroke="#111" strokeWidth="1.200" />
  </svg>
);

function ViewRow({ selected, text, w }) {
  return (
    <div className="flex h-[17px] items-center border-b border-[#c0c0c0] bg-white">
      <div className="flex h-full w-[223px] shrink-0 items-center border-r border-[#b4b4b4] pl-[3px]">
        <Block />
        <div
          className={
            "ml-[3px] flex h-full flex-1 items-center " +
            (selected ? "border-2 border-[#808080] bg-[#6680bd] text-white" : "border-2 border-transparent text-black")
          }
        >
          <Fit w={w} className={"text-[12px] leading-[14px] " + JP}>
            {text}
          </Fit>
        </div>
      </div>
      <div className="flex h-full w-[18px] shrink-0 items-center justify-center border-r border-[#b4b4b4]">
        <Camera />
      </div>
      <div className="h-full w-[18px] shrink-0 border-r border-[#b4b4b4]" />
      <div className="flex h-full w-[17px] shrink-0 items-center justify-center">
        <svg width="16" height="16" viewBox="0 0 17 17" className="shrink-0">
          <Zoomer />
        </svg>
      </div>
    </div>
  );
}

function SidePanel() {
  return (
    <div className="flex w-[289px] shrink-0 flex-col">
      <div className="mt-[2px] ml-px flex h-[22px] w-[288px] items-center rounded-[2px] border border-[#a8a8a8] bg-[#f3f3f3] pr-[4px] pl-[2px]">
        <Fit w={30} className={"text-[12px] leading-[18px] text-black " + JP}>ﾌｨｰﾁｬ</Fit>
        <svg width="24" height="12" viewBox="0 0 24 12" className="ml-auto" shapeRendering="crispEdges">
          <path d="M2.500 1.500H6.500V6.500M2.500 1.500V6.500M5.500 1.500V6.500M1 6.500H8M4.500 7V11" stroke="#000" fill="none" />
          <path d="M17 3L23 10M23 3L17 10" stroke="#000" strokeWidth="1.700" shapeRendering="auto" />
        </svg>
      </div>

      {/* assembly tree */}
      <div className="mt-[4px] ml-[3px] h-[347px] border-r-2 border-b-2 border-[#777] bg-white">
        <div className="mt-px flex h-[20px] w-[282px] border-t border-b border-[#b4b4b4] bg-[#f0f0f0]">
          <div className="flex w-[218px] shrink-0 items-center justify-between border-r border-[#b4b4b4] pr-[8px] pl-[10px]">
            <svg width="16" height="13" viewBox="0 0 16 13">
              <path d="M.5 6.500L6.500 .8V4H15.500V9H6.500V12.200Z" fill="#6fb6f0" stroke="#12408a" />
            </svg>
            <svg width="16" height="13" viewBox="0 0 16 13">
              <path d="M15.500 6.500L9.500 .8V4H.5V9H9.500V12.200Z" fill="#6fb6f0" stroke="#12408a" />
            </svg>
          </div>
          <div className="w-[16px] shrink-0 border-r border-[#b4b4b4]" />
          <div className="w-[16px] shrink-0 border-r border-[#b4b4b4]" />
          <div className="w-[16px] shrink-0 border-r border-[#b4b4b4]" />
          <div className="w-[16px] shrink-0 border-r border-[#b4b4b4]" />
        </div>
        <div className="w-[282px]">
          <div className="flex h-[22px] border-b border-[#b4b4b4]">
            <div className="flex w-[218px] shrink-0 items-center border-r border-[#b4b4b4] pl-[12px]">
              <Pyramid />
              <div className="ml-[2px] flex h-full flex-1 items-center border border-dotted border-[#444] bg-[#b0b0b0] pl-[1px]">
                <Fit w={95} className={"text-[12px] leading-[18px] font-bold text-black " + JP}>
                  メインアセンブリ
                </Fit>
              </div>
            </div>
            <div className="w-[16px] shrink-0 border-r border-[#b4b4b4]" />
            <div className="w-[16px] shrink-0 border-r border-[#b4b4b4]" />
            <div className="w-[16px] shrink-0 border-r border-[#b4b4b4]" />
          </div>
          {TREE.map((row, i) => (
            <TreeRow key={i} row={row} i={i} />
          ))}
          <div className="flex h-[9px] pl-[217px]">
            <div className="w-[17px] border-r border-l border-[#b4b4b4]" />
            <div className="w-[16px] border-r border-[#b4b4b4]" />
            <div className="w-[16px] border-r border-[#b4b4b4]" />
          </div>
        </div>
      </div>
      <div className="flex h-[28px] items-start pl-[2px]">
        <Tab w={79} tw={36} active>ｱｾﾝﾌﾞﾘ</Tab>
        <Tab w={77} tw={18} dim>ｾｯﾄ</Tab>
        <span className="w-[2px]" />
        <Tab w={76} tw={36}>型分割</Tab>
      </div>

      {/* splitter */}
      <div className="h-[8px] shrink-0 border-r-2 border-b-2 border-[#777] pt-[2px]">
        <div className="ml-[2px] h-[3px] w-[283px] border border-[#a8a8a8] bg-white" />
      </div>

      {/* saved views */}
      <div className="relative mt-[4px] ml-[4px] h-[348px] shrink-0 border-r-2 border-b-2 border-[#777]">
        <div className="h-full border-l border-[#999] bg-white pt-[2px]">
          <div className="flex h-[19px] w-[278px] border-t border-b border-[#a8a8a8] bg-[#f0f0f0]">
            <div className="flex w-[223px] shrink-0 items-center border-r border-[#a8a8a8] pl-[4px]">
              <Fit w={24} className={"text-[12px] leading-[16px] text-black " + JP}>ビュー</Fit>
            </div>
            <div className="w-[18px] shrink-0 border-r border-[#a8a8a8]" />
            <div className="w-[18px] shrink-0 border-r border-[#a8a8a8]" />
            <div className="w-[18px] shrink-0 border-r border-[#a8a8a8]" />
          </div>
          <ViewRow selected text="メイン" w={29} />
          <ViewRow text="メイン非表示" w={65} />
        </div>
        <div className="absolute top-[17px] left-[2px] h-[26px] w-[281px] border-[3px] border-[#de2028]" />
        <svg width="13" height="20" viewBox="0 0 13 20" className="absolute top-[30px] left-[166px]">
          <path d="M.8 .8V15L4 12L6.800 18.500L9.500 17.400L6.800 11H11.500Z" fill="#fff" stroke="#222" strokeWidth=".9" />
        </svg>
      </div>
      <div className="flex h-[26px] shrink-0 items-start pl-[2px]">
        <Tab w={78} tw={30}>ﾌｨｰﾁｬ</Tab>
        <Tab w={77} tw={18}>ｾｯﾄ</Tab>
        <Tab w={81} tw={48} active>ﾓﾃﾞﾙﾋﾞｭｰ</Tab>
      </div>
    </div>
  );
}

function Model() {
  const label = "fill-none stroke-[#3b3bb8] stroke-1";
  return (
    <svg width="924" height="784" viewBox="298 112 924 784" className="block" shapeRendering="crispEdges">
      <g transform="translate(335 360) scale(.33333)" stroke="#000" strokeWidth="3" strokeLinejoin="round">
        <path fill="#005e98" d="M177 308L125 378L172 907H337L388 831L225 834Z" />
        <path fill="#005e98" d="M373 664L430 664C500 660 555 640 590 612C560 680 500 735 380 737Z" />
        <path
          fill="#009dff"
          fillRule="evenodd"
          d="M177 308L430 305C470 305 520 312 560 335C605 362 634 415 634 490C634 530 620 580 588 612C545 650 490 663 430 664L373 664L388 831L225 834ZM348 418L362 550H410C440 548 464 530 464 490C463 445 430 418 380 418Z"
        />
        <path fill="#005e98" d="M348 418L362 550H410C440 548 464 530 464 490C463 445 430 418 380 418Z" />
        <path fill="#f2f2f2" d="M357 497C385 500 405 520 411 550H362Z" />
        <path fill="none" d="M352 455L380 420M411 548L464 485M172 907L225 834M380 722L420 665" />

        <path fill="#a064c4" d="M698 451L647 522L663 720L716 650Z" />
        <path fill="#a064c4" d="M716 650L663 720L1220 898L1273 826Z" />
        <path fill="#a064c4" d="M1141 472L1235 450L1185 522L1146 530Z" />
        <path fill="#ffa0ff" d="M698 451L1222 277L1237 450L1141 472L1154 631L1257 655L1273 826L716 650Z" />
        <path fill="#a064c4" d="M822 554L1027 505L1037 605Z" />
        <path fill="#f2f2f2" d="M945 582L975 574L977 589Z" />
        <path fill="none" d="M867 562L882 541M975 574L1027 507" />
      </g>
      <g transform="translate(745 360) scale(.33333)" stroke="#000" strokeWidth="3" strokeLinejoin="round">
        <path fill="#c80000" d="M1015 292L965 360L970 438H1028Z" />
        <path fill="#c80000" d="M618 442L580 492L594 655L631 601Z" />
        <path fill="#c00000" d="M631 601L590 655V673L993 671L1045 598Z" />
        <path fill="#c80000" d="M1045 598L993 671L1007 820L1058 748Z" />
        <path fill="#c00000" d="M1058 748L1007 820H1132L1184 745Z" />
        <path fill="#ff0000" d="M1015 292L1143 290L1184 745L1058 748L1045 598L631 601L618 442L1028 439Z" />

        <path fill="#c400c4" d="M86 298L34 370L148 525C165 550 185 575 202 585C225 560 250 545 288 531C250 515 225 495 197 457Z" />
        <path fill="#c400c4" d="M418 296L368 365L374 450C385 470 405 481 420 481H437Z" />
        <path fill="#c400c4" d="M202 587L140 680C128 705 128 720 128 745C130 800 170 858 240 882C270 890 300 895 340 895H578L632 823L400 700Z" />
        <path
          fill="#ff00ff"
          d="M86 298H268L376 450C390 470 405 481 420 481H437L418 296H581L632 823H400C330 820 270 805 230 772C195 742 178 705 180 660C182 615 200 585 230 560C250 545 270 537 288 531C250 515 225 495 197 457Z"
        />
        <path fill="#c400c4" d="M446 592H410C370 595 348 625 350 660C352 695 380 712 400 712H458Z" />
        <path fill="#f2f2f2" d="M354 665L395 664L398 711C375 708 358 690 354 665Z" />
        <path fill="none" d="M197 457L148 525M372 663L414 594M395 663L446 595M412 825L366 893M178 685L128 750" />
      </g>
      <g fill="none" stroke="#2c2cc4">
        <path d="M488 375.500L345.500 377.500L371.500 655.500L764.500 652.500L738.500 373.500L595 375.500" />
        <path d="M902 372.500L759.500 373.500L785.500 652.500L1142.500 649.500L1116.500 371.500L974 372.500" />
      </g>
      <g className={label + " font-['Noto_Sans_CJK_JP',sans-serif]"} fontSize="42">
        <text x="385" y="428">ぱ</text>
        <text x="609" y="426">ぱ</text>
        <text x="768" y="425">パ</text>
        <text x="943" y="424">パ</text>
      </g>
      <g className={label + " font-['Liberation_Sans',sans-serif]"} fontSize="47">
        <text x="445" y="431" className="font-['Roboto',sans-serif]">1</text>
        <text x="668" y="430">2</text>
        <text x="826" y="428">3</text>
        <text x="1001" y="427">4</text>
      </g>
      <text
        x="305"
        y="181"
        fontSize="21"
        textLength="232"
        lengthAdjust="spacingAndGlyphs"
        className="fill-[#ee1c24] font-['Noto_Sans_CJK_JP',sans-serif]"
      >
        ←メインアセンブリ有効
      </text>
      <g fill="none" stroke="#555">
        <path d="M352.500 801L349.500 816.500H357.500ZM352.500 817L354.500 834M355.500 817L356.500 834" />
        <path d="M360 835.500H376M360 837.500H376M376.500 833V840.500L393.500 836.500Z" />
        <circle cx="356" cy="836.500" r="2.500" />
        <path d="M358 833L362 828M360 835L364 830M359 827.500L365.500 824.500L365 831Z" />
      </g>
      <g className="fill-[#444] font-['Open_Sans',sans-serif] font-light" fontSize="18">
        <text x="346" y="789">Y</text>
        <text x="362" y="821" fontSize="17">Z</text>
        <text x="400" y="837">X</text>
      </g>
    </svg>
  );
}

function StatusCell({ w, children }) {
  return (
    <div
      className="relative ml-[3px] flex h-[18px] shrink-0 items-center border-t border-r border-l border-[#a0a0a0] border-r-white"
      style={{ width: w }}
    >
      {children}
    </div>
  );
}

export default function App() {
  return (
    <div className={"flex h-[924px] w-[1231px] flex-col overflow-hidden border-t border-r-2 border-[#1b1b26] bg-[#bcd0e8] " + JP}>
      <TitleBar />
      <div className="mr-[7px] ml-[3px] flex h-[887px] shrink-0 flex-col bg-[#f0f0f0]">
        <MenuBar />
        <div className="flex h-[26px] shrink-0">
          <Bar grip={false} className="w-[76px] pl-[8px]" items="new open save" />
          <Bar className="ml-[55px] w-[143px] pl-[2px]" items="undo v redo g eyes swap purge" />
          <Bar
            className="w-[468px] pl-[2px]"
            items="fitwin zoomcol zoomwin lens pan orbit | iso cTop cFront cRight cBottom cBack cLeft | heartbox camundo | *shade section tanbox v pickbox v"
          />
          <Bar className="ml-[64px] w-[253px] pl-[2px]" items="bulbGray bulbOn bulbPick | prev next | graydots measure boxspark v pastepl cubeprops" />
          <Bar className="w-[153px] pl-[2px]" items="palette bricks paint v dropper linetypes lineweights" />
        </div>
        <div className="flex h-[26px] shrink-0">
          <Bar grip={false} className="w-[125px] pl-[8px]" items="selbox curx | marquee v graytool g" />
          <Bar className="w-[231px] pl-[3px]" items="*h1 h2 *h3 *h4 h5 *h6 h7 *h8 h9 h10" />
          <Bar className="w-[54px] pl-[2px]" items="axhide funnel" />
          <Bar
            className="w-[335px] pl-[2px]"
            items="asmadd asmopen asmgray | gplus g2plus tplus pplus gspark gfour mirror | gdel | mold link end"
          />
          <Bar className="w-[54px] pl-[3px]" items="sketch polyl" />
          <Bar className="ml-[126px] w-[293px] pl-[1px]" items="p1 p2 p3 p4 p5 p6 p7 p8 p9 p10 p11 p12 p13" />
        </div>
        <div className="flex h-[787px] shrink-0">
          <SidePanel />
          <div className="ml-[4px] flex-1 overflow-hidden border-t-2 border-l-2 border-b border-[#777] border-b-white bg-[#e4e4e4]">
            <Model />
          </div>
        </div>
        <div className="flex h-[20px] shrink-0 items-end pl-[485px]">
          <StatusCell w={186} />
          <StatusCell w={105} />
          <StatusCell w={105} />
          <StatusCell w={104} />
          <StatusCell w={200}>
            <Fit w={96} className={"ml-[1px] text-[12px] leading-[16px] text-black " + JP}>
              メインアセンブリ
            </Fit>
          </StatusCell>
          <StatusCell w={16}>
            <span className="shrink-0 text-[12px] leading-[16px] text-black">単</span>
            <svg width="9" height="10" viewBox="0 0 9 10" className="absolute right-0 bottom-0">
              <path d="M0 10L9 1M4 10L9 5M7.500 10L9 8.500" stroke="#f4f4f4" strokeWidth="2.500" />
              <path d="M0 10L9 1M4 10L9 5M7.500 10L9 8.500" stroke="#777" />
            </svg>
          </StatusCell>
        </div>
      </div>
      <div className="mt-[4px] h-[3px] shrink-0 border-t border-b border-[#8fdcf5] bg-[#3fb4c8]" />
    </div>
  );
}
